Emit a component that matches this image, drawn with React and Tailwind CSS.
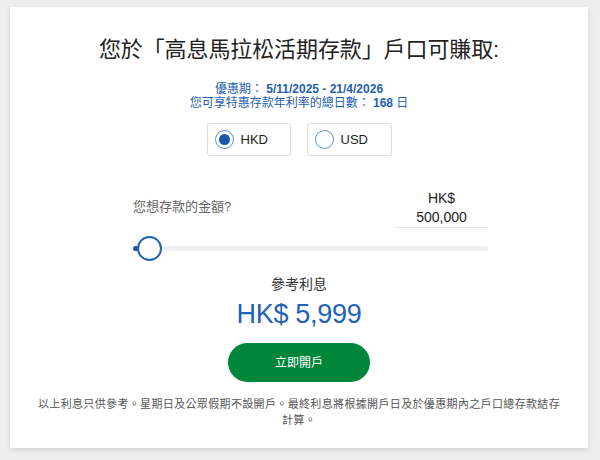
export default function App() {
  const font = { fontFamily: '"Liberation Sans", Arial, "Noto Sans CJK TC", sans-serif' };
  return (
    <div className="w-[600px] h-[460px] bg-[#efefef] pt-[7px] px-[10px]" style={font}>
      <div className="w-[578px] h-[441px] bg-white shadow-[0_2px_6px_rgba(0,0,0,0.12)] flex flex-col items-center">
        <h1 className="mt-[29px] text-[22px] leading-[28px] text-[#222] tracking-[-0.1px]">您於「高息馬拉松活期存款」戶口可賺取:</h1>
        <div className="mt-[18px] text-[12px] leading-[14px] text-[#2460ae] text-center">
          <div>優惠期： <span className="font-bold">5/11/2025 - 21/4/2026</span></div>
          <div>您可享特惠存款年利率的總日數： <span className="font-bold">168</span> 日</div>
        </div>
        <div className="mt-[13px] flex gap-[16px]">
          <div className="w-[84px] h-[33px] border border-[#dcdcdc] rounded-[3px] flex items-center pl-[7px] gap-[7px]">
            <div className="w-[19px] h-[19px] rounded-full border-[1.5px] border-[#5a8fd8] flex items-center justify-center">
              <div className="w-[11px] h-[11px] rounded-full bg-[#1a56ab]"></div>
            </div>
            <span className="text-[13px] text-[#222]">HKD</span>
          </div>
          <div className="w-[85px] h-[33px] border border-[#dcdcdc] rounded-[3px] flex items-center pl-[7px] gap-[7px]">
            <div className="w-[19px] h-[19px] rounded-full border-[1.5px] border-[#5a8fd8]"></div>
            <span className="text-[13px] text-[#222]">USD</span>
          </div>
        </div>
        <div className="mt-[33px] w-[355px] self-start ml-[123px]">
          <div className="flex justify-between items-start">
            <div className="mt-[8px] text-[13px] text-[#666]">您想存款的金額?</div>
            <div className="w-[93px] flex flex-col items-center border-b border-[#e4e4e4] pb-[1px]">
              <div className="text-[14px] leading-[18px] text-[#222]">HK$</div>
              <div className="text-[14px] leading-[18px] text-[#222] mt-[1px]">500,000</div>
            </div>
          </div>
          <div className="relative mt-[18px] h-[5px] rounded-full bg-[#efefef]">
            <div className="absolute left-0 top-0 h-[5px] w-[10px] rounded-full bg-[#1a56ab]"></div>
            <div className="absolute left-[4px] top-[-10px] w-[25px] h-[25px] rounded-full bg-white border-2 border-[#1f62b8]"></div>
          </div>
        </div>
        <div className="mt-[24px] text-[14px] leading-[18px] text-[#333]">參考利息</div>
        <div className="mt-[5px] text-[27px] leading-[32px] text-[#1f62b8] tracking-[-0.3px]">HK$ 5,999</div>
        <button className="mt-[13px] w-[142px] h-[39px] rounded-full bg-[#00863a] text-white text-[12px]">立即開戶</button>
        <div className="mt-[14px] w-[532px] text-center text-[11px] leading-[16px] text-[#555] tracking-[0.35px]">以上利息只供參考。星期日及公眾假期不設開戶。最終利息將根據開戶日及於優惠期內之戶口總存款結存計算。</div>
      </div>
    </div>
  );
}
